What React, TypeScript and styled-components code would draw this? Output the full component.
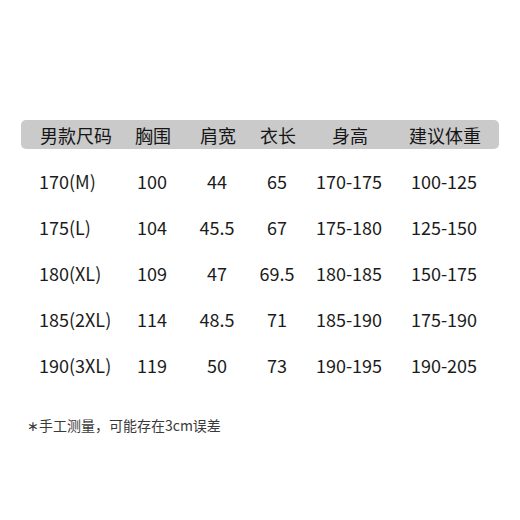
import styled, { createGlobalStyle } from "styled-components";

const GlobalStyle = createGlobalStyle`
  html, body {
    margin: 0;
    padding: 0;
    background: #ffffff;
  }
  body {
    font-family: "Noto Sans CJK SC", "Noto Sans", sans-serif;
    color: #1c1c1c;
  }
`;

const Page = styled.div`
  width: 520px;
  height: 520px;
  box-sizing: border-box;
  padding: 120px 21px 0 21px;
  display: flex;
  flex-direction: column;
`;

const COLUMNS = "81px 64px 66px 54px 90px 100px";

const HeaderBar = styled.div`
  display: grid;
  grid-template-columns: ${COLUMNS};
  align-items: center;
  height: 29px;
  width: 478px;
  box-sizing: border-box;
  padding-left: 19px;
  background: #cacaca;
  border-radius: 5px;
`;

const Body = styled.div`
  display: flex;
  flex-direction: column;
  padding-top: 9px;
`;

const Row = styled.div`
  display: grid;
  grid-template-columns: ${COLUMNS};
  align-items: center;
  height: 46px;
  padding-left: 18px;
`;

const Cell = styled.div<{ $first?: boolean; $head?: boolean }>`
  font-size: 18px;
  line-height: 1;
  text-align: ${({ $first }) => ($first ? "left" : "center")};
  white-space: nowrap;
  color: ${({ $head }) => ($head ? "#161616" : "#1c1c1c")};
`;

const Note = styled.div`
  margin-top: 30px;
  padding-left: 6px;
  font-size: 14px;
  color: #3a3a3a;
  line-height: 1;
`;

const headers = ["男款尺码", "胸围", "肩宽", "衣长", "身高", "建议体重"];

const rows = [
  ["170(M)", "100", "44", "65", "170-175", "100-125"],
  ["175(L)", "104", "45.5", "67", "175-180", "125-150"],
  ["180(XL)", "109", "47", "69.5", "180-185", "150-175"],
  ["185(2XL)", "114", "48.5", "71", "185-190", "175-190"],
  ["190(3XL)", "119", "50", "73", "190-195", "190-205"],
];

export default function App() {
  return (
    <>
      <GlobalStyle />
      <Page>
        <HeaderBar>
          {headers.map((h, i) => (
            <Cell key={h} $head $first={i === 0}>
              {h}
            </Cell>
          ))}
        </HeaderBar>
        <Body>
          {rows.map((r) => (
            <Row key={r[0]}>
              {r.map((v, i) => (
                <Cell key={i} $first={i === 0}>
                  {v}
                </Cell>
              ))}
            </Row>
          ))}
        </Body>
        <Note>∗手工测量，可能存在3cm误差</Note>
      </Page>
    </>
  );
}
